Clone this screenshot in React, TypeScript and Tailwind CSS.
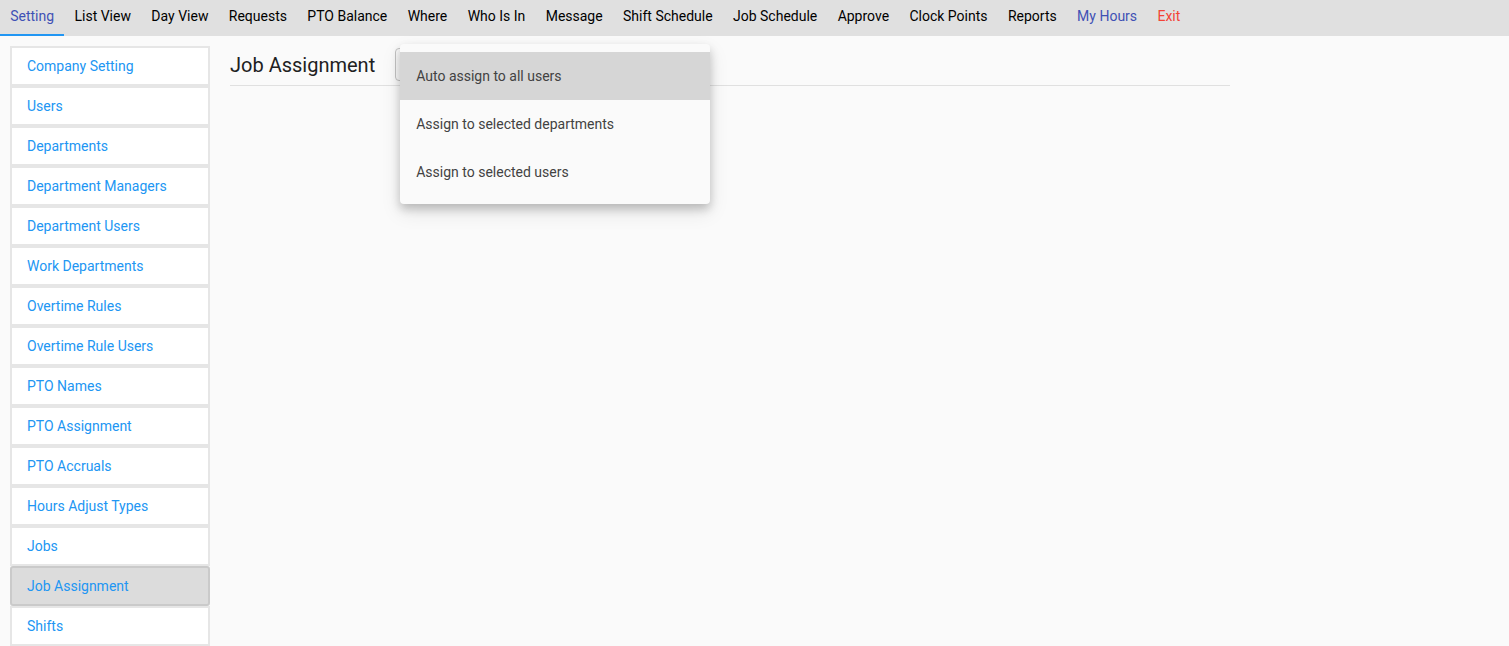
import { ChevronDown } from 'lucide-react';

const tabs = [
    'Setting', 'List View', 'Day View', 'Requests', 'PTO Balance', 'Where', 'Who Is In', 'Message',
    'Shift Schedule', 'Job Schedule', 'Approve', 'Clock Points', 'Reports', 'My Hours', 'Exit',
];

const menu = [
    'Company Setting', 'Users', 'Departments', 'Department Managers', 'Department Users', 'Work Departments',
    'Overtime Rules', 'Overtime Rule Users', 'PTO Names', 'PTO Assignment', 'PTO Accruals', 'Hours Adjust Types',
    'Jobs', 'Job Assignment', 'Shifts',
];

const options = ['Auto assign to all users', 'Assign to selected departments', 'Assign to selected users'];

function tabColor(t: string) {
    if (t === 'Setting' || t === 'My Hours') return 'text-[#3f51b5]';
    if (t === 'Exit') return 'text-[#f44336]';
    return 'text-black';
}

export default function App() {
    return (
        <div className="h-[646px] overflow-hidden bg-[#fafafa] font-['Roboto',sans-serif]">
            <nav className="flex h-9 items-stretch bg-[#e0e0e0]">
                {tabs.map((t) => (
                    <div
                        key={t}
                        className={`flex items-center border-b-2 px-[10.2px] pb-0.5 text-sm ${tabColor(t)} ${
                            t === 'Setting' ? 'border-[#2196f3]' : 'border-transparent'
                        }`}
                    >
                        {t}
                    </div>
                ))}
            </nav>

            <div className="flex gap-5 pl-2.5 pt-2.5">
                <div className="flex w-[200px] flex-col">
                    {menu.map((m) => (
                        <div
                            key={m}
                            className={`flex h-10 items-center border-2 px-[15px] text-sm text-[#2196f3] ${
                                m === 'Job Assignment'
                                    ? 'rounded-[3px] border-[#cacaca] bg-[#dcdcdc]'
                                    : 'border-[#e6e6e6] bg-white'
                            }`}
                        >
                            {m}
                        </div>
                    ))}
                </div>

                <div className="w-[1000px]">
                    <div className="flex h-10 items-center gap-5 border-b border-[#e0e0e0] pb-0.5">
                        <h1 className="text-xl text-[#212121]">Job Assignment</h1>
                        <div className="relative">
                            {/* select box, hidden under the open menu */}
                            <div className="flex h-[33px] w-[300px] items-center justify-end rounded border border-[#c4c4c4] px-3">
                                <ChevronDown className="h-4 w-4 text-[#757575]" />
                            </div>
                            <div className="absolute left-[5px] top-[-4px] z-10 w-[310px] rounded bg-[#fafafa] py-2 shadow-[0_5px_10px_rgba(0,0,0,0.2),0_8px_20px_rgba(0,0,0,0.1)]">
                                {options.map((o, i) => (
                                    <div
                                        key={o}
                                        className={`flex h-12 items-center px-4 text-sm text-[#424242] ${i === 0 ? 'bg-[#d6d6d6]' : ''}`}
                                    >
                                        {o}
                                    </div>
                                ))}
                            </div>
                        </div>
                    </div>
                </div>
            </div>
        </div>
    );
}
